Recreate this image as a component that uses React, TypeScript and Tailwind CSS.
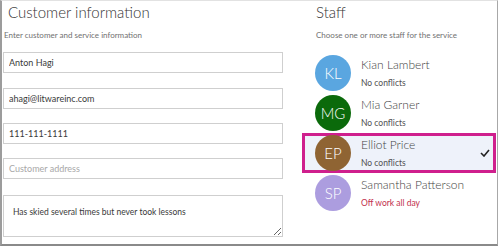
import React from "react";

const staff = [
  { initials: "KL", name: "Kian Lambert", status: "No conflicts", color: "bg-[#5aa6e0]" },
  { initials: "MG", name: "Mia Garner", status: "No conflicts", color: "bg-[#0b6a0b]" },
  { initials: "EP", name: "Elliot Price", status: "No conflicts", color: "bg-[#8f6433]", selected: true },
  { initials: "SP", name: "Samantha Patterson", status: "Off work all day", color: "bg-[#ac9ddf]", busy: true },
];

const font = "font-['Lato','Liberation_Sans',sans-serif]";

const Field = ({ value, placeholder, className = "" }: { value?: string; placeholder?: string; className?: string }) => (
  <input
    readOnly
    defaultValue={value}
    placeholder={placeholder}
    className={`block w-[280px] h-[21px] border border-[#cfcfcf] bg-white px-[5px] text-[9px] text-[#3a3a3a] placeholder:text-[#a8a8a8] outline-none ${font} ${className}`}
  />
);

export default function App() {
  return (
    <div className={`w-[500px] h-[248px] bg-white ${font}`}>
      <div className="flex w-[498px] h-[246px] border-t border-t-[#e2e2e2] border-l-2 border-l-[#9c9c9c] border-r border-r-[#a8a8a8] border-b-2 border-b-[#8a8a8a]">
        <div className="w-[300px] pl-px">
          <h2 className="ml-[5px] text-[15px] leading-[22px] font-light text-[#333]">Customer information</h2>
          <p className="ml-px mt-[5px] text-[8px] leading-[14px] text-[#707070]">Enter customer and service information</p>
          <Field value="Anton Hagi" className="mt-[10px]" />
          <Field value="ahagi@litwareinc.com" className="mt-[15px]" />
          <Field value="111-111-1111" className="mt-[14px]" />
          <Field placeholder="Customer address" className="mt-[14px]" />
          <textarea
            readOnly
            defaultValue="Has skied several times but never took lessons"
            className={`mt-[16px] block w-[280px] h-[42px] border border-[#cfcfcf] px-[9px] pt-[9px] text-[8.5px] leading-[14px] text-[#3a3a3a] outline-none resize ${font}`}
          />
        </div>
        <div className="flex-1 mr-px">
          <h2 className="ml-[14px] text-[15px] leading-[22px] font-light text-[#333]">Staff</h2>
          <p className="ml-[14px] mt-[5px] text-[8px] leading-[14px] text-[#707070]">Choose one or more staff for the service</p>
          <ul className="mt-[11px]">
            {staff.map((s) => (
              <li
                key={s.initials}
                className={`flex items-center h-[40px] border-[3px] pl-[10px] pr-[3px] ${
                  s.selected ? "border-[#cf1f8d] bg-[#eef2fa]" : "border-transparent"
                }`}
              >
                <div className={`flex items-center justify-center w-[36px] h-[36px] rounded-full text-white text-[15px] font-light ${s.color}`}>
                  {s.initials}
                </div>
                <div className="ml-[10px] flex flex-col">
                  <span className="text-[12px] leading-[16px] font-light text-[#444]">{s.name}</span>
                  <span className={`mt-[3px] text-[8.5px] leading-[14px] ${s.busy ? "text-[#c2304d]" : "text-[#505050]"}`}>{s.status}</span>
                </div>
                {s.selected && (
                  <svg className="ml-auto" width="10" height="8" viewBox="0 0 10 8">
                    <polyline points="1,4 4,7 9,1" fill="none" stroke="#222" strokeWidth="1.6" />
                  </svg>
                )}
              </li>
            ))}
          </ul>
        </div>
      </div>
    </div>
  );
}
